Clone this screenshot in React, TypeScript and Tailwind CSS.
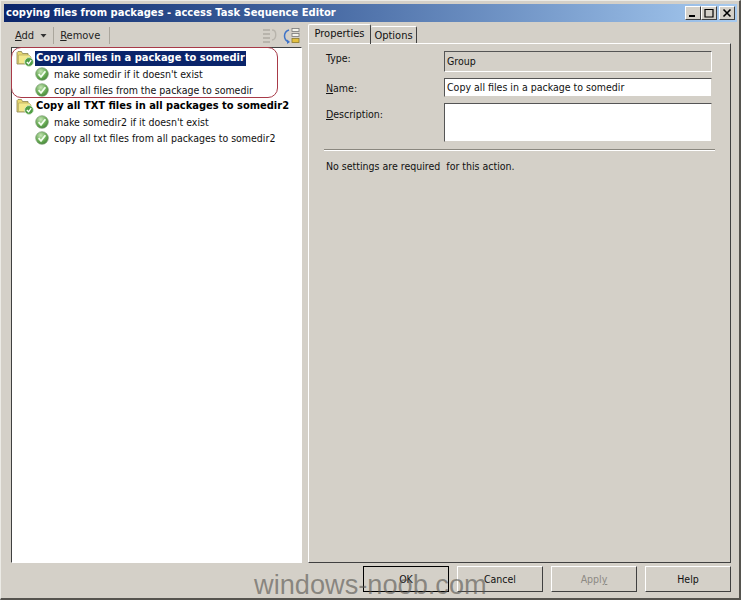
import React from "react";

function Check() {
  return (
    <svg width="14" height="14" viewBox="0 0 14 14" className="shrink-0">
      <defs>
        <radialGradient id="g" cx="0.4" cy="0.3" r="0.8">
          <stop offset="0" stopColor="#c4e4b4" />
          <stop offset="0.6" stopColor="#64a850" />
          <stop offset="1" stopColor="#3a7c32" />
        </radialGradient>
      </defs>
      <circle cx="7" cy="7" r="6.3" fill="url(#g)" stroke="#7c9c74" strokeWidth="0.7" />
      <path d="M3.6 7.2 L6 9.8 L10.4 4.2" fill="none" stroke="#f4fff0" strokeWidth="1.8" />
    </svg>
  );
}

function Folder() {
  return (
    <svg width="18" height="18" viewBox="0 0 18 18" className="shrink-0">
      <path d="M1 3.5 L1 15 L12 15 L12 4.5 L6.5 4.5 L5.5 2.5 L2 2.5 Z" fill="#e8d870" stroke="#8a8450" strokeWidth="0.8" />
      <path d="M2.5 14.5 L2.5 6 L13 6 L15 8 L15 14.5 Z" fill="#f2e88c" stroke="#a8a060" strokeWidth="0.6" />
      <circle cx="13" cy="13" r="4.4" fill="#4f9e44" stroke="#d8ead0" strokeWidth="0.8" />
      <path d="M10.8 13 L12.6 14.8 L15.2 11.2" fill="none" stroke="#fff" strokeWidth="1.3" />
    </svg>
  );
}

function Group({ label, selected, kids }: { label: string; selected?: boolean; kids: string[] }) {
  return (
    <div>
      <div className="flex h-4 items-center pl-[4px]">
        <Folder />
        <span
          className={
            "ml-[1px] flex h-[15px] items-center whitespace-nowrap px-[1px] text-[11px] font-bold " +
            (selected ? "bg-[#0a246a] text-white" : "text-black")
          }
        >
          {label}
        </span>
      </div>
      {kids.map((k) => (
        <div key={k} className="flex h-4 items-center pl-[23px]">
          <Check />
          <span className="ml-[5px] whitespace-nowrap">{k}</span>
        </div>
      ))}
    </div>
  );
}

function Btn({ label, children, cls }: { label?: string; children?: React.ReactNode; cls?: string }) {
  return (
    <div
      className={
        "flex h-[26px] w-[86px] items-center justify-center border border-b-[#404040] border-l-white border-r-[#404040] border-t-white " +
        (cls || "")
      }
    >
      {label}
      {children}
    </div>
  );
}

export default function App() {
  return (
    <div
      className="relative flex h-[600px] w-[741px] flex-col overflow-hidden border-b-2 border-l border-r-2 border-t border-b-[#55534e] border-l-[#ecebe6] border-r-[#55534e] border-t-[#ecebe6] bg-[#d4d0c8] text-[10.5px] leading-4 text-[#111]"
      style={{ fontFamily: '"DejaVu Sans Condensed", "DejaVu Sans", sans-serif' }}
    >
      {/* title bar */}
      <div className="ml-[3px] mr-[2px] mt-[3px] flex h-[18px] shrink-0 items-center justify-between bg-gradient-to-r from-[#0a246a] to-[#a6caf0] pl-[2px] pr-[2px]">
        <span className="whitespace-nowrap text-[11.1px] font-bold text-white">
          copying files from packages - access Task Sequence Editor
        </span>
        <div className="flex">
          {[0, 1].map((i) => (
            <div
              key={i}
              className="flex h-[14px] w-4 items-center justify-center border border-b-[#404040] border-l-white border-r-[#404040] border-t-white bg-[#d4d0c8]"
            >
              <svg width="10" height="10" viewBox="0 0 10 10">
                {i === 0 ? (
                  <rect x="1" y="7" width="6" height="2" fill="#000" />
                ) : (
                  <path d="M1 1.5 H9 M1 1 V9 H9 V1" fill="none" stroke="#000" strokeWidth="1.2" />
                )}
              </svg>
            </div>
          ))}
          <div className="ml-[2px] flex h-[14px] w-4 items-center justify-center border border-b-[#404040] border-l-white border-r-[#404040] border-t-white bg-[#d4d0c8]">
            <svg width="10" height="10" viewBox="0 0 10 10">
              <path d="M1.5 1.5 L8.5 8.5 M8.5 1.5 L1.5 8.5" stroke="#000" strokeWidth="1.6" />
            </svg>
          </div>
        </div>
      </div>

      {/* body */}
      <div className="flex min-h-0 flex-1 pl-[10px] pr-[8px] pt-[2px]">
        {/* left pane */}
        <div className="flex w-[291px] shrink-0 flex-col">
          <div className="flex h-[23px] shrink-0 items-center text-[11px] text-[#222]">
            <span className="ml-[4px]">
              <span className="underline">A</span>dd
            </span>
            <svg width="7" height="4" viewBox="0 0 7 4" className="ml-[6px]">
              <path d="M0.5 0 H6.5 L3.5 3.5 Z" fill="#333" />
            </svg>
            <div className="ml-[6px] h-[17px] w-px bg-[#aaa69c]" />
            <span className="ml-[6px]">
              <span className="underline">R</span>emove
            </span>
            <div className="ml-[9px] h-[17px] w-px bg-[#aaa69c]" />
            <svg width="18" height="18" viewBox="0 0 18 18" className="ml-auto">
              <path d="M2 3 H9 M2 7 H9 M2 11 H9 M2 15 H9" stroke="#b8b4ac" strokeWidth="2" />
              <path d="M11 3 C16 3 16 12 11 13" fill="none" stroke="#b8b4ac" strokeWidth="1.4" />
            </svg>
            <svg width="18" height="18" viewBox="0 0 18 18" className="ml-[4px] mr-[1px]">
              <path d="M6 3 C0 5 0 13 6 15" fill="none" stroke="#3f74c8" strokeWidth="1.5" />
              <path d="M4 12.5 L7 15 L4 17" fill="#3f74c8" />
              <rect x="9" y="1.5" width="7" height="3" fill="#f4f4ec" stroke="#777" strokeWidth="0.8" />
              <rect x="9" y="6.5" width="7" height="3" fill="#f4f4ec" stroke="#777" strokeWidth="0.8" />
              <rect x="9" y="11.5" width="7" height="4" fill="#e4c040" stroke="#8a7a30" strokeWidth="0.8" />
            </svg>
          </div>
          <div className="mb-[3px] flex-1 border border-b-white border-l-[#404040] border-r-white border-t-[#404040] bg-white pt-[2px]">
            <Group
              selected
              label="Copy all files in a package to somedir"
              kids={["make somedir if it doesn't exist", "copy all files from the package to somedir"]}
            />
            <Group
              label="Copy all TXT files in all packages to somedir2"
              kids={["make somedir2 if it doesn't exist", "copy all txt files from all packages to somedir2"]}
            />
          </div>
        </div>

        {/* right pane */}
        <div className="ml-[6px] flex min-w-0 flex-1 flex-col">
          <div className="flex h-[20px] shrink-0 items-end">
            <div className="z-10 flex h-[20px] w-[63px] items-start justify-center rounded-t-[2px] border-l border-r border-t border-l-white border-r-[#404040] border-t-white pt-[1px] text-[11px]">
              Properties
            </div>
            <div className="flex h-[18px] w-[46px] items-start justify-center rounded-t-[2px] border-r border-t border-r-[#404040] border-t-white pt-[1px] text-[11px]">
              Options
            </div>
          </div>
          <div className="-mt-px mb-[3px] flex-1 border border-b-[#404040] border-l-white border-r-[#404040] border-t-white pl-[17px] pr-[18px] pt-[7px]">
            <div className="flex h-[21px]">
              <span className="w-[118px] shrink-0 -mt-[1px]">Type:</span>
              <div className="flex flex-1 items-center border border-b-white border-l-[#555] border-r-white border-t-[#555] pb-[1px] pl-[2px]">
                Group
              </div>
            </div>
            <div className="mt-[6px] flex h-[19px]">
              <span className="flex w-[118px] shrink-0 items-center">
                <span>
                  <span className="underline">N</span>ame:
                </span>
              </span>
              <div className="flex flex-1 items-center whitespace-nowrap border border-b-[#d4d0c8] border-l-[#555] border-r-[#d4d0c8] border-t-[#555] bg-white pb-[1px] pl-[2px]">
                Copy all files in a package to somedir
              </div>
            </div>
            <div className="mt-[6px] flex h-[39px]">
              <span className="w-[118px] shrink-0 pt-[3px]">
                <span className="underline">D</span>escription:
              </span>
              <div className="flex-1 border border-b-[#d4d0c8] border-l-[#555] border-r-[#d4d0c8] border-t-[#555] bg-white" />
            </div>
            <div className="-ml-[2px] -mr-[3px] mt-[7px] border-b border-t border-b-white border-t-[#8a877f]" />
            <div className="mt-[7px] whitespace-pre">No settings are required  for this action.</div>
          </div>
        </div>
      </div>

      {/* buttons */}
      <div className="mb-[6px] flex shrink-0 justify-end gap-2 pr-[8px]">
        <Btn label="OK" cls="!border-black" />
        <Btn label="Cancel" />
        <Btn cls="text-[#8d8a84]">
          <span>
            Appl<span className="underline">y</span>
          </span>
        </Btn>
        <Btn label="Help" />
      </div>

      {/* annotation */}
      <div className="absolute left-[10px] top-[46px] h-[51px] w-[267px] rounded-[10px] border border-[#a83a48]" />
      {/* watermark */}
      <div
        className="absolute left-[253px] top-[566px] whitespace-nowrap text-[27.2px] leading-[36px] text-[#55534e]/60"
        style={{ fontFamily: '"Liberation Sans", sans-serif' }}
      >
        windows-noob.com
      </div>
    </div>
  );
}
